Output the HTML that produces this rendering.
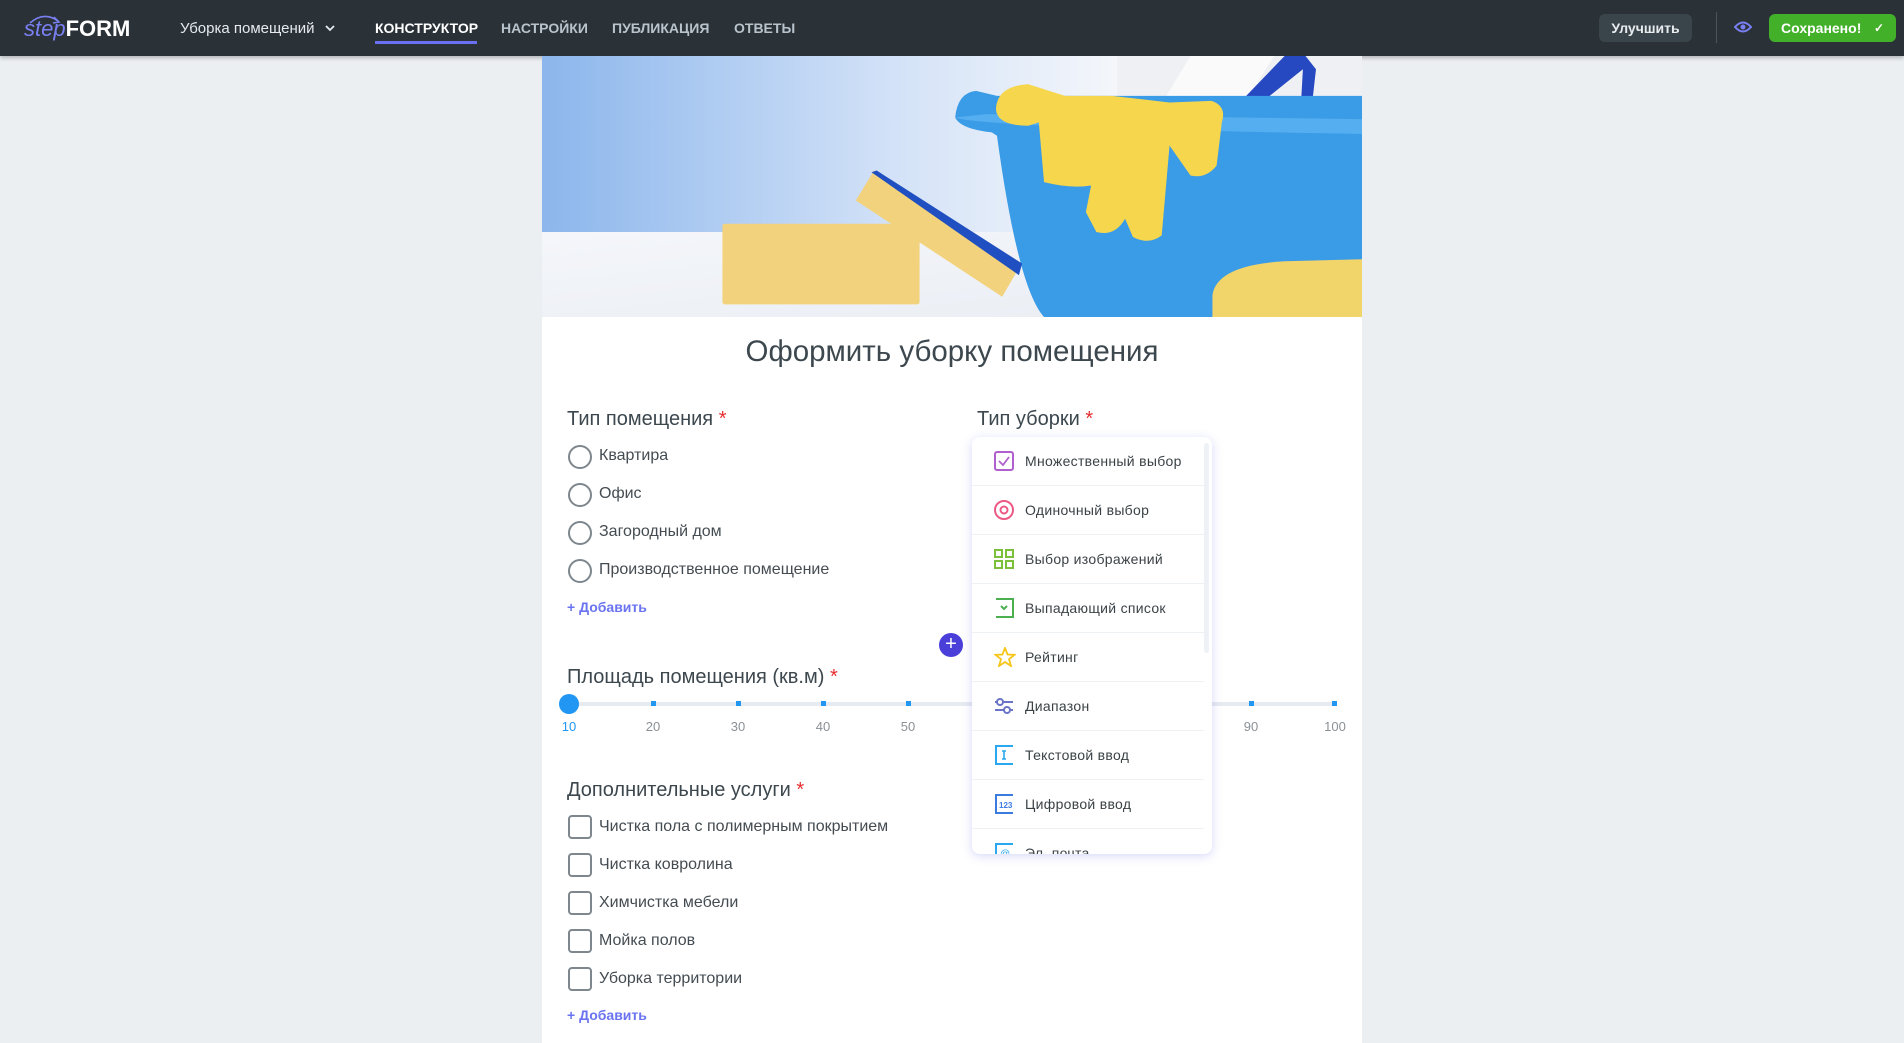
<!DOCTYPE html>
<html><head><meta charset="utf-8"><style>
*{box-sizing:border-box;margin:0;padding:0}
body{width:1904px;height:1043px;overflow:hidden;background:#eceff2;font-family:"Liberation Sans",sans-serif;position:relative;color:#3c474e}
.hdr{position:absolute;left:0;top:0;width:1904px;height:56px;background:#2a3237;box-shadow:0 2px 4px rgba(0,0,0,.25)}
.a{position:absolute;white-space:nowrap}
.nav{font-weight:bold;font-size:14px;color:#b9c3cc;top:20px}
.form{position:absolute;left:542px;top:56px;width:820px;height:987px;background:#fff}
.lbl{font-size:20px;color:#3c474e}
.req{color:#e52d2d}
.opt{font-size:16px;color:#444c52}
.rad{position:absolute;width:24px;height:24px;border:2px solid #7d878d;border-radius:50%}
.chk{position:absolute;width:24px;height:24px;border:2px solid #7d878d;border-radius:4px}
.add{font-size:14px;font-weight:bold;color:#6a74f0}
.tick{position:absolute;top:701px;width:5px;height:5px;background:#2196f3}
.tl{position:absolute;top:719px;font-size:13px;color:#8a9196;width:40px;text-align:center}
.dd{position:absolute;left:972px;top:437px;width:240px;height:417px;background:#fff;border-radius:8px;box-shadow:0 2px 10px rgba(90,100,230,.25);overflow:hidden}
.it{position:absolute;left:0;width:232px;height:49px;border-bottom:1px solid #edf1f4}
.it span{position:absolute;left:53px;top:16px;font-size:14px;color:#3a4246;letter-spacing:.3px}
.it svg{position:absolute;left:22px;top:14px}
</style></head><body>
<div class="hdr"></div>
<div class="a" style="left:24px;top:16px;font-size:22px;color:#fff;font-weight:bold"><span style="color:#7a80f3;font-style:italic;font-weight:normal">step</span>FORM</div>
<svg class="a" style="left:28px;top:14px" width="34" height="10"><path d="M2 9 Q16 -3 30 7" stroke="#7a80f3" stroke-width="1.6" fill="none"/><path d="M26 3 L31 8 L25 9" stroke="#7a80f3" stroke-width="1.5" fill="none"/></svg>
<div class="a" style="left:180px;top:20px;font-size:15px;color:#e6eaee">Уборка помещений</div>
<svg class="a" style="left:325px;top:24px" width="10" height="8"><path d="M1 2 L5 6 L9 2" stroke="#e6eaee" stroke-width="1.8" fill="none"/></svg>
<div class="a nav" style="left:375px;color:#fff">КОНСТРУКТОР</div>
<div class="a" style="left:375px;top:41px;width:102px;height:3px;background:#6a6ef0"></div>
<div class="a nav" style="left:501px">НАСТРОЙКИ</div>
<div class="a nav" style="left:612px">ПУБЛИКАЦИЯ</div>
<div class="a nav" style="left:734px">ОТВЕТЫ</div>
<div class="a" style="left:1599px;top:14px;width:93px;height:28px;background:#3a454b;border-radius:6px;color:#e8ecef;font-weight:bold;font-size:14px;text-align:center;line-height:28px">Улучшить</div>
<div class="a" style="left:1716px;top:12px;width:1px;height:31px;background:#4a555b"></div>
<svg class="a" style="left:1734px;top:20px" width="18" height="14"><path d="M1 7 Q9 -2 17 7 Q9 16 1 7Z" stroke="#7a80f3" stroke-width="2" fill="none"/><circle cx="9" cy="7" r="2.5" fill="#7a80f3"/></svg>
<div class="a" style="left:1769px;top:14px;width:127px;height:28px;background:#43b02a;border-radius:6px;color:#fff;font-weight:bold;font-size:14px;line-height:28px;padding-left:12px">Сохранено! <span style="position:absolute;right:12px;font-size:12px">✓</span></div>

<div class="form">
<svg width="820" height="261" viewBox="0 0 1568 786" preserveAspectRatio="none" style="display:block">
<defs><linearGradient id="bg" x1="0" x2="1"><stop offset="0" stop-color="#8cb6ec"/><stop offset=".45" stop-color="#d6e4f8"/><stop offset=".7" stop-color="#f4f6fa"/></linearGradient>
<linearGradient id="fl" y1="0" y2="1"><stop offset="0" stop-color="#f4f6fa"/><stop offset="1" stop-color="#e9edf3"/></linearGradient></defs>
<rect width="1568" height="786" fill="url(#bg)"/>
<rect y="530" width="1568" height="256" fill="url(#fl)"/>
<rect x="1100" y="0" width="468" height="200" fill="#eef0f4"/>
<path d="M1190 130 L1240 0 L1400 0 L1340 150Z" fill="#fafafa"/>
<path d="M1310 180 L1420 0 L1460 0 L1480 40 L1470 180 L1450 180 L1455 40 L1340 185Z" fill="#2648c0"/>
<path d="M790 185 Q795 110 830 105 L870 120 L1568 120 L1568 786 L960 786 Q910 700 870 240 L860 230 Q800 220 790 185Z" fill="#3a9be6"/>
<path d="M790 185 Q830 215 1568 235 L1568 190 L850 175Z" fill="#54aeef"/>
<path d="M868 160 Q870 90 930 85 L1000 120 L1090 120 L1200 140 L1280 135 Q1310 150 1300 200 L1290 330 Q1270 370 1240 360 L1200 270 L1185 540 Q1160 570 1130 545 L1115 490 Q1095 545 1060 530 L1040 470 L1050 390 Q1010 400 960 380 L950 200 L930 210 Q870 210 868 160Z" fill="#f5d64d"/>
<rect x="345" y="505" width="377" height="243" rx="6" fill="#f2d27c"/>
<path d="M600 435 L635 345 L915 630 L880 725 Z" fill="#f2d27c"/>
<path d="M630 350 L640 345 L918 625 L912 660 Z" fill="#1f4fc0"/>
<path d="M1282 786 L1282 720 Q1290 630 1420 618 L1568 612 L1568 786Z" fill="#f1d46a"/>
</svg>
<div class="a" style="left:0;width:820px;top:279px;text-align:center;font-size:29.5px;color:#3c474e">Оформить уборку помещения</div>
</div>

<div class="a lbl" style="left:567px;top:408px">Тип помещения <span class="req">*</span></div>
<div class="rad" style="left:568px;top:445px"></div><div class="a opt" style="left:599px;top:447px">Квартира</div>
<div class="rad" style="left:568px;top:483px"></div><div class="a opt" style="left:599px;top:485px">Офис</div>
<div class="rad" style="left:568px;top:521px"></div><div class="a opt" style="left:599px;top:523px">Загородный дом</div>
<div class="rad" style="left:568px;top:559px"></div><div class="a opt" style="left:599px;top:561px">Производственное помещение</div>
<div class="a add" style="left:567px;top:599px">+ Добавить</div>

<div class="a" style="left:939px;top:633px;width:24px;height:24px;border-radius:50%;background:#4a3fd8;color:#fff;text-align:center;line-height:23px;font-size:20px">+</div>

<div class="a lbl" style="left:567px;top:666px">Площадь помещения (кв.м) <span class="req">*</span></div>
<div class="a" style="left:569px;top:702px;width:766px;height:4px;background:#e7ebef"></div>
<div class="tick" style="left:651px"></div><div class="tick" style="left:736px"></div><div class="tick" style="left:821px"></div><div class="tick" style="left:906px"></div><div class="tick" style="left:1249px"></div><div class="tick" style="left:1332px"></div>
<div class="a" style="left:559px;top:694px;width:20px;height:20px;border-radius:50%;background:#2196f3"></div>
<div class="tl" style="left:549px;color:#2196f3">10</div><div class="tl" style="left:633px">20</div><div class="tl" style="left:718px">30</div><div class="tl" style="left:803px">40</div><div class="tl" style="left:888px">50</div><div class="tl" style="left:1231px">90</div><div class="tl" style="left:1315px">100</div>

<div class="a lbl" style="left:567px;top:779px">Дополнительные услуги <span class="req">*</span></div>
<div class="chk" style="left:568px;top:815px"></div><div class="a opt" style="left:599px;top:818px">Чистка пола с полимерным покрытием</div>
<div class="chk" style="left:568px;top:853px"></div><div class="a opt" style="left:599px;top:856px">Чистка ковролина</div>
<div class="chk" style="left:568px;top:891px"></div><div class="a opt" style="left:599px;top:894px">Химчистка мебели</div>
<div class="chk" style="left:568px;top:929px"></div><div class="a opt" style="left:599px;top:932px">Мойка полов</div>
<div class="chk" style="left:568px;top:967px"></div><div class="a opt" style="left:599px;top:970px">Уборка территории</div>
<div class="a add" style="left:567px;top:1007px">+ Добавить</div>

<div class="a lbl" style="left:977px;top:408px">Тип уборки <span class="req">*</span></div>
<div class="dd">
<div class="a" style="left:232px;top:6px;width:5px;height:210px;background:#eef1f6;border-radius:3px"></div>
<div class="it" style="top:0"><svg width="20" height="20"><rect x="1" y="1" width="18" height="18" rx="2" fill="none" stroke="#b05fcf" stroke-width="2"/><path d="M5 10 L9 14 L15 6" stroke="#b05fcf" stroke-width="1.8" fill="none"/></svg><span>Множественный выбор</span></div>
<div class="it" style="top:49px"><svg width="20" height="20"><circle cx="10" cy="10" r="9" fill="none" stroke="#ec5a86" stroke-width="2"/><circle cx="10" cy="10" r="3.5" fill="none" stroke="#ec5a86" stroke-width="2"/></svg><span>Одиночный выбор</span></div>
<div class="it" style="top:98px"><svg width="20" height="20"><g fill="none" stroke="#7cbf3a" stroke-width="2"><rect x="1" y="1" width="7" height="7"/><rect x="12" y="1" width="7" height="7"/><rect x="1" y="12" width="7" height="7"/><rect x="12" y="12" width="7" height="7"/></g></svg><span>Выбор изображений</span></div>
<div class="it" style="top:147px"><svg width="20" height="20"><path d="M2 1 L19 1 L19 19 L2 19" fill="none" stroke="#4caf50" stroke-width="2"/><path d="M7 8 L10 11 L13 8" stroke="#4caf50" stroke-width="2" fill="none"/></svg><span>Выпадающий список</span></div>
<div class="it" style="top:196px"><svg width="22" height="20"><path d="M11 1 L13.6 7.5 L20.5 7.8 L15 12.2 L17 19 L11 15 L5 19 L7 12.2 L1.5 7.8 L8.4 7.5Z" fill="none" stroke="#f5c518" stroke-width="1.8"/></svg><span>Рейтинг</span></div>
<div class="it" style="top:245px"><svg width="20" height="20"><g stroke="#6a75c9" stroke-width="2" fill="none"><path d="M1 6 H19 M1 14 H19"/><circle cx="6" cy="6" r="3" fill="#fff"/><circle cx="13" cy="14" r="3" fill="#fff"/></g></svg><span>Диапазон</span></div>
<div class="it" style="top:294px"><svg width="20" height="20"><path d="M19 1 L2 1 L2 19 L19 19" fill="none" stroke="#29a8f0" stroke-width="2"/><path d="M8 6 H12 M10 6 V14 M8 14 H12" stroke="#29a8f0" stroke-width="1.6"/></svg><span>Текстовой ввод</span></div>
<div class="it" style="top:343px"><svg width="20" height="20"><path d="M19 1 L2 1 L2 19 L19 19" fill="none" stroke="#3b7be0" stroke-width="2"/><text x="5" y="14" font-size="8" fill="#3b7be0" font-family="Liberation Sans" font-weight="bold">123</text></svg><span>Цифровой ввод</span></div>
<div class="it" style="top:392px"><svg width="20" height="20"><path d="M19 1 L2 1 L2 19 L19 19" fill="none" stroke="#29a8f0" stroke-width="2"/><text x="6" y="14" font-size="10" fill="#29a8f0" font-family="Liberation Sans">@</text></svg><span>Эл. почта</span></div>
</div>
</body></html>
